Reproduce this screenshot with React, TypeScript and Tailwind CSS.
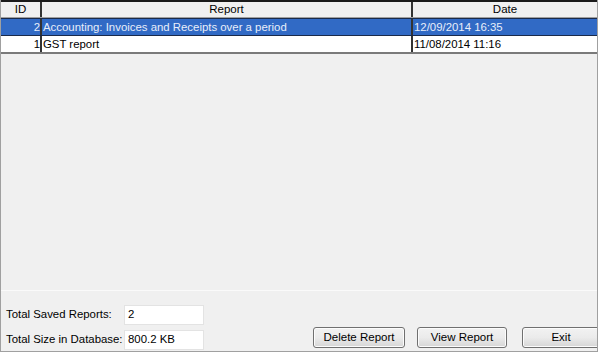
import React from "react";

const rows = [
  { id: "2", report: "Accounting: Invoices and Receipts over a period", date: "12/09/2014 16:35", sel: true },
  { id: "1", report: "GST report", date: "11/08/2014 11:16", sel: false },
];

function Btn({ label, w }: { label: string; w: string }) {
  return (
    <div
      className={`${w} h-[21px] flex items-center justify-center rounded-[3px] border border-[#707070] bg-gradient-to-b from-[#f2f2f2] via-[#ebebeb] to-[#d6d6d6] text-[11.5px] text-black whitespace-nowrap shadow-[inset_0_0_0_1px_#fcfcfc]`}
    >
      {label}
    </div>
  );
}

export default function App() {
  return (
    <div
      className="w-[598px] h-[352px] bg-[#f0f0f0] flex flex-col border-l border-r border-b border-[#a0a0a0] overflow-hidden"
      style={{ fontFamily: '"Liberation Sans", Arial, sans-serif' }}
    >
      <div className="h-[291px] flex flex-col border-b border-[#fafafa]">
        <div className="flex h-[18px] border-t-2 border-[#1a1a1a] border-b border-b-[#a0a0a0] text-[11.5px] text-black">
          <div className="w-[41px] flex items-center justify-center border-r-2 border-[#333]">ID</div>
          <div className="w-[371px] flex items-center justify-center border-r-2 border-[#333]">Report</div>
          <div className="flex-1 flex items-center justify-center">Date</div>
        </div>
        {rows.map((r) => (
          <div
            key={r.id}
            className={`flex h-[18px] text-[11.4px] leading-[15px] whitespace-nowrap ${
              r.sel ? "bg-[#316ac5] text-[#e8eefa] border-y border-[#1a2a4a]" : "bg-white text-black border-b-2 border-b-[#7a7a7a]"
            }`}
          >
            <div className="w-[41px] flex items-center justify-end border-r-2 border-[#333]">{r.id}</div>
            <div className="w-[371px] flex items-center pl-[1px] border-r-2 border-[#333]">{r.report}</div>
            <div className="flex-1 flex items-center pl-[1px]">{r.date}</div>
          </div>
        ))}
      </div>
      <div className="flex-1 flex items-end justify-between pl-[5px] pb-[1px]">
        <div className="flex flex-col gap-[5px]">
          <div className="flex items-center h-[20px]">
            <span className="w-[118px] text-[11.4px] text-black whitespace-nowrap">Total Saved Reports:</span>
            <div className="w-[80px] h-[20px] bg-white border border-[#e3e3e3] text-[11.4px] flex items-center pl-[3px]">2</div>
          </div>
          <div className="flex items-center h-[20px]">
            <span className="w-[118px] text-[11.4px] text-black whitespace-nowrap">Total Size in Database:</span>
            <div className="w-[80px] h-[20px] bg-white border border-[#e3e3e3] text-[11.4px] flex items-center pl-[3px]">800.2 KB</div>
          </div>
        </div>
        <div className="flex gap-[12px] pb-[2px] mr-[-3px]">
          <Btn label="Delete Report" w="w-[92px]" />
          <Btn label="View Report" w="w-[90px]" />
          <Btn label="Exit" w="w-[78px] ml-[3px]" />
        </div>
      </div>
    </div>
  );
}
